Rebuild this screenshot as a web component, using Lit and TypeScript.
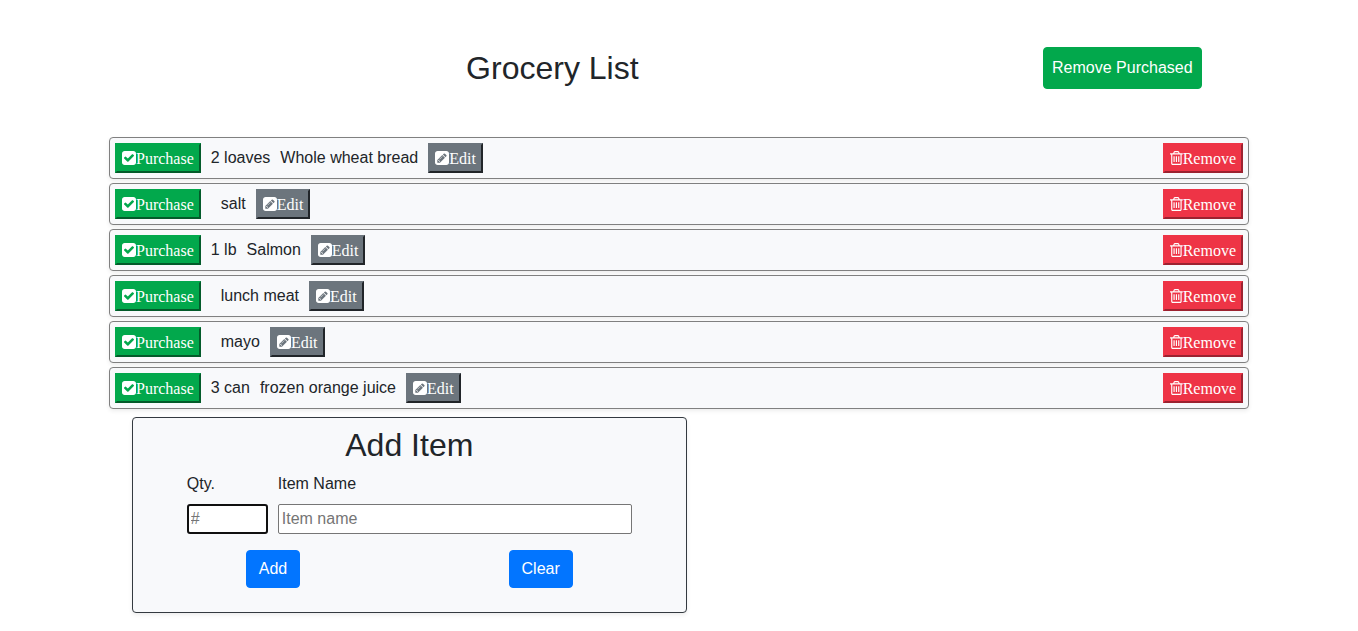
import { LitElement, html, css, svg } from "lit";
import { customElement, state, query } from "lit/decorators.js";

interface GroceryItem {
  id: number;
  qty: string;
  name: string;
}

const checkSquare = svg`<path d="M813 1299l614-614q19-19 19-45t-19-45l-102-102q-19-19-45-19t-45 19l-467 467-211-211q-19-19-45-19t-45 19l-102 102q-19 19-19 45t19 45l358 358q19 19 45 19t45-19zm851-883v960q0 119-84.500 203.500t-203.500 84.500h-960q-119 0-203.500-84.500t-84.500-203.500v-960q0-119 84.500-203.500t203.500-84.500h960q119 0 203.500 84.500t84.500 203.500z"/>`;
const pencilSquare = svg`<path d="M404 980l152 152-52 52h-56v-96h-96v-56zm414-390q14 13-3 30l-291 291q-17 17-30 3-14-13 3-30l291-291q17-17 30-3zm-274 690l544-544-288-288-544 544v288h288zm608-608l92-92q28-28 28-68t-28-68l-152-152q-28-28-68-28t-68 28l-92 92zm384-384v960q0 119-84.500 203.500t-203.500 84.500h-960q-119 0-203.500-84.500t-84.500-203.500v-960q0-119 84.500-203.500t203.500-84.500h960q119 0 203.500 84.500t84.500 203.500z"/>`;
const trash = svg`<path d="M512 736v576q0 14-9 23t-23 9h-64q-14 0-23-9t-9-23v-576q0-14 9-23t23-9h64q14 0 23 9t9 23zm256 0v576q0 14-9 23t-23 9h-64q-14 0-23-9t-9-23v-576q0-14 9-23t23-9h64q14 0 23 9t9 23zm256 0v576q0 14-9 23t-23 9h-64q-14 0-23-9t-9-23v-576q0-14 9-23t23-9h64q14 0 23 9t9 23zm128 724v-948h-896v948q0 22 7 40.500t14.500 27 10.500 8.500h832q3 0 10.500-8.500t14.500-27 7-40.500zm-672-1076h448l-48-117q-7-9-17-11h-317q-10 2-17 11zm928 32v64q0 14-9 23t-23 9h-96v948q0 83-47 143.500t-113 60.500h-832q-66 0-113-58.500t-47-141.500v-952h-96q-14 0-23-9t-9-23v-64q0-14 9-23t23-9h309l70-167q15-37 54-63t79-26h320q40 0 79 26t54 63l70 167h309q14 0 23 9t9 23z"/>`;

@customElement("app-root")
export class AppRoot extends LitElement {
  static styles = css`
    :host {
      display: block;
      color: #212529;
      font: 16px/24px "Liberation Sans", Arial, sans-serif;
    }
    * {
      box-sizing: border-box;
    }
    .container {
      max-width: 1140px;
      margin: 0 auto;
      padding: 47px 0 16px;
    }
    .header {
      display: grid;
      grid-template-columns: 7fr 2fr;
      place-items: center;
      margin-bottom: 48px;
    }
    h1,
    h2 {
      margin: 0;
      font-size: 32px;
      line-height: 38px;
      font-weight: 500;
      text-align: center;
    }
    button {
      font: inherit;
      color: #fff;
      cursor: pointer;
    }
    .btn {
      border: 1px solid #0275ff;
      border-radius: 4px;
      background: #0275ff;
      padding: 6px 12px;
    }
    .clear-purchased {
      background: #02a84c;
      border-color: #02a84c;
      padding: 8px;
    }
    .list {
      display: grid;
      gap: 4px;
      list-style: none;
      margin: 0;
      padding: 0;
    }
    .item {
      display: flex;
      align-items: center;
      gap: 10px;
      padding: 5px;
      border: 1px solid #808080;
      border-radius: 4px;
      background: #f8f9fb;
      box-shadow: 0 2px 4px rgba(0, 0, 0, 0.075);
    }
    .action {
      display: flex;
      align-items: center;
      padding: 2px 5px 0;
      border: 2px solid;
      font-family: "Liberation Serif", "Times New Roman", serif;
    }
    .purchase {
      background: #02a84c;
      border-color: #02a84c #035b2a #035b2a #02a84c;
    }
    .edit {
      background: #6c757d;
      border-color: #6c757d #212529 #212529 #6c757d;
    }
    .remove {
      background: #ee3446;
      border-color: #ee3446 #9c2230 #9c2230 #ee3446;
      margin-left: auto;
    }
    svg {
      height: 14px;
      margin-bottom: 2px;
      fill: currentColor;
    }
    .card {
      width: calc(50% - 15px);
      margin: 8px 0 0 2%;
      padding: 8px 54px 24px;
      border: 1px solid #343a40;
      border-radius: 4px;
      background: #f8f9fb;
      box-shadow: 0 2px 4px rgba(0, 0, 0, 0.075);
    }
    .fields {
      display: grid;
      grid-template-columns: 81px 1fr;
      gap: 10px;
      margin-top: 8px;
    }
    .field {
      display: grid;
      gap: 8px;
    }
    input {
      width: 100%;
      min-width: 0;
      height: 30px;
      margin: 0;
      padding: 2px 3px;
      border: 1px solid #767676;
      border-radius: 2px;
      font: inherit;
      color: inherit;
      background: #fff;
    }
    input::placeholder {
      color: #757575;
    }
    input:focus {
      border: 2px solid #101010;
      border-radius: 3px;
      padding: 1px 2px;
      outline: none;
    }
    .buttons {
      display: flex;
      justify-content: space-between;
      padding: 0 59px;
      margin-top: 16px;
    }
  `;

  @state() private items: GroceryItem[] = [
    { id: 1, qty: "2 loaves", name: "Whole wheat bread" },
    { id: 2, qty: "", name: "salt" },
    { id: 3, qty: "1 lb", name: "Salmon" },
    { id: 4, qty: "", name: "lunch meat" },
    { id: 5, qty: "", name: "mayo" },
    { id: 6, qty: "3 can", name: "frozen orange juice" },
  ];

  @query("#qty") private qtyInput!: HTMLInputElement;
  @query("#name") private nameInput!: HTMLInputElement;

  firstUpdated() {
    this.qtyInput.focus();
  }

  private remove(id: number) {
    this.items = this.items.filter((item) => item.id !== id);
  }

  private add(event: Event) {
    event.preventDefault();
    const name = this.nameInput.value.trim();
    if (!name) return;
    this.items = [...this.items, { id: Date.now(), qty: this.qtyInput.value, name }];
    (event.target as HTMLFormElement).reset();
    this.qtyInput.focus();
  }

  render() {
    return html`
      <main class="container">
        <header class="header">
          <h1>Grocery List</h1>
          <button class="btn clear-purchased" type="button">Remove Purchased</button>
        </header>
        <ul class="list">
          ${this.items.map(
            (item) => html`
              <li class="item">
                <button class="action purchase" type="button">
                  <svg viewBox="128 128 1536 1536" aria-hidden="true">${checkSquare}</svg>Purchase
                </button>
                <span>${item.qty}</span>
                <span>${item.name}</span>
                <button class="action edit" type="button">
                  <svg viewBox="0 0 1536 1536" aria-hidden="true">${pencilSquare}</svg>Edit
                </button>
                <button class="action remove" type="button" @click=${() => this.remove(item.id)}>
                  <svg viewBox="0 128 1408 1536" aria-hidden="true">${trash}</svg>Remove
                </button>
              </li>
            `
          )}
        </ul>
        <form class="card" @submit=${this.add}>
          <h2>Add Item</h2>
          <div class="fields">
            <div class="field">
              <label for="qty">Qty.</label>
              <input id="qty" type="text" placeholder="#" />
            </div>
            <div class="field">
              <label for="name">Item Name</label>
              <input id="name" type="text" placeholder="Item name" />
            </div>
          </div>
          <div class="buttons">
            <button class="btn" type="submit">Add</button>
            <button class="btn" type="reset">Clear</button>
          </div>
        </form>
      </main>
    `;
  }
}
